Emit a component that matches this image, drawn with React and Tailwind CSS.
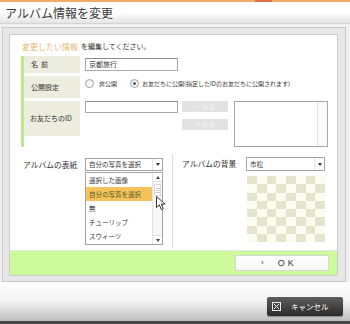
export default function App() {
  const cells = Array.from({ length: 64 }, (_, i) => (Math.floor(i / 8) + i) % 2 === 0);
  return (
    <div className="w-[350px] h-[324px] overflow-hidden bg-white flex flex-col font-['Noto_Sans_CJK_JP',sans-serif] text-[#333]">
      <div className="h-[2px] flex shrink-0">
        <div className="w-[255px] bg-[#f3ab6c]" />
        <div className="w-[17px] bg-[#e0714f]" />
        <div className="flex-1 bg-[#f3ab6c]" />
      </div>
      <div className="h-[22px] shrink-0 bg-linear-to-b from-white via-white to-[#e4e4e4] border-b border-[#d4d4d4] flex items-center pl-[5px]">
        <span className="text-[12px] leading-none text-[#3a3a3a]">アルバム情報を変更</span>
      </div>
      <div className="shrink-0 pt-[3px] pl-[2px] pr-[4px] bg-[#f0f0f0]">
        <div className="h-[255px] border border-[#c9c9c9] bg-[#e7e7e7] pl-[6px] pt-[6px] pr-[7px] pb-[5px] flex">
          <div className="flex-1 flex flex-col bg-white border border-[#cbcbcb]">
            {/* instruction */}
            <div className="pt-[7px] pl-[12px] leading-[9px] flex items-end">
              <span className="text-[8px] text-[#ebb570]">変更したい情報</span>
              <span className="text-[7px] ml-[3px] text-[#333]">を編集してください。</span>
            </div>
            {/* form */}
            <div className="mt-[5px] ml-[11px] flex">
              <div className="w-[59px] border-l-[3px] border-[#b9ea8e] flex flex-col gap-[3px] text-[7px] text-[#333]">
                <div className="h-[17px] bg-[#ececdf] pl-[7px] flex items-center">
                  <span>名</span>
                  <span className="ml-[3px]">前</span>
                </div>
                <div className="h-[22px] bg-[#ececdf] pl-[7px] flex items-center">公開設定</div>
                <div className="h-[35px] bg-[#ececdf] pl-[6px] flex items-center">お友だちのID</div>
              </div>
              <div className="ml-[5px] flex flex-col gap-[3px]">
                <div className="h-[17px] pt-[2px]">
                  <div className="w-[93px] h-[13px] border border-[#a9a9a9] border-t-[#8d8d8d] bg-white pl-[3px] text-[7px] leading-[11px]">京都旅行</div>
                </div>
                <div className="h-[22px] pt-[3px] flex items-start text-[6px] leading-[9px] text-[#333]">
                  <div className="flex items-center">
                    <div className="w-[9px] h-[9px] rounded-full border border-[#9d9d9d] bg-linear-to-b from-[#f0f0f0] to-white" />
                    <span className="ml-[5px]">非公開</span>
                  </div>
                  <div className="flex items-center ml-[13px]">
                    <div className="w-[9px] h-[9px] rounded-full border border-[#9d9d9d] bg-linear-to-b from-[#f0f0f0] to-white flex items-center justify-center">
                      <div className="w-[3px] h-[3px] rounded-full bg-[#555]" />
                    </div>
                    <span className="ml-[3px] whitespace-nowrap">お友だちに公開(指定したIDのお友だちに公開されます)</span>
                  </div>
                </div>
                <div className="h-[46px] flex items-start">
                  <div className="w-[93px] h-[12px] border border-[#a9a9a9] border-t-[#8d8d8d] bg-white" />
                  <div className="ml-[4px] w-[46px] flex flex-col gap-[7px]">
                    <div className="h-[11px] bg-[#e2e2e2] text-[6px] leading-[11px] text-[#f4f4f4] text-center">← 追 加</div>
                    <div className="h-[11px] bg-[#e2e2e2] text-[6px] leading-[11px] text-[#f4f4f4] text-center">→ 削 除</div>
                  </div>
                  <div className="ml-[6px] w-[94px] h-[46px] border border-[#a6a6a6] bg-white flex justify-end">
                    <div className="w-[10px] border-l border-[#e0e0e0] bg-[#fafafa]" />
                  </div>
                </div>
              </div>
            </div>
            {/* lower section */}
            <div className="mt-[7px] h-[94px] flex">
              <div className="w-[163px] border-r border-[#dddddd] pt-[4px] pl-[13px] flex items-start">
                <div className="w-[62px] h-[13px] text-[7.75px] leading-[13px] text-[#333] whitespace-nowrap">アルバムの表紙</div>
                <div className="flex flex-col">
                  <div className="w-[78px] h-[13px] border border-[#a3a3a3] bg-white flex">
                    <div className="flex-1 pl-[3px] text-[6.5px] leading-[11px]">自分の写真を選択</div>
                    <div className="w-[10px] border-l border-[#e2e2e2] flex items-center justify-center">
                      <div className="w-0 h-0 border-l-[2px] border-r-[2px] border-t-[3px] border-l-transparent border-r-transparent border-t-[#333]" />
                    </div>
                  </div>
                  <div className="relative mt-[1px] w-[78px] h-[73px] border border-[#a3a3a3] bg-white flex">
                    <div className="flex-1 flex flex-col text-[6.5px] leading-[14px]">
                      <div className="h-[14px] pl-[3px]">選択した画像</div>
                      <div className="h-[14px] pl-[3px] bg-[#f5c25c] text-[#4f5f23]">自分の写真を選択</div>
                      <div className="h-[14px] pl-[3px]">無</div>
                      <div className="h-[14px] pl-[3px]">チューリップ</div>
                      <div className="h-[14px] pl-[3px]">スウィーツ</div>
                    </div>
                    <div className="w-[10px] border-l border-[#e4e4e4] bg-[#f7f7f7] flex flex-col">
                      <div className="h-[9px] border-b border-[#e0e0e0] bg-white flex items-center justify-center">
                        <div className="w-0 h-0 border-l-[2px] border-r-[2px] border-b-[3px] border-l-transparent border-r-transparent border-b-[#444]" />
                      </div>
                      <div className="mt-[2px] mx-[1px] h-[12px] border border-[#d8d8d8] bg-white flex flex-col items-center justify-center gap-[1px]">
                        <div className="w-[4px] h-px bg-[#c8c8c8]" />
                        <div className="w-[4px] h-px bg-[#c8c8c8]" />
                        <div className="w-[4px] h-px bg-[#c8c8c8]" />
                      </div>
                      <div className="mt-auto h-[9px] border-t border-[#e0e0e0] bg-white flex items-center justify-center">
                        <div className="w-0 h-0 border-l-[2px] border-r-[2px] border-t-[3px] border-l-transparent border-r-transparent border-t-[#444]" />
                      </div>
                    </div>
                    <svg className="absolute left-[70px] top-[23px]" width="11" height="15" viewBox="0 0 11 15">
                      <path d="M0.5 0.5 L0.5 11.5 L3.3 8.8 L5.4 13.6 L7.3 12.8 L5.3 8.1 L9.2 8.1 Z" fill="white" stroke="#222" strokeWidth="0.9" strokeLinejoin="round" />
                    </svg>
                  </div>
                </div>
              </div>
              <div className="flex-1 pt-[3px] pl-[9px] flex items-start">
                <div className="w-[64px] h-[14px] text-[7.75px] leading-[14px] text-[#333] whitespace-nowrap">アルバムの背景</div>
                <div className="flex flex-col">
                  <div className="w-[79px] h-[14px] border border-[#a3a3a3] bg-white flex">
                    <div className="flex-1 pl-[3px] text-[6.5px] leading-[12px]">市松</div>
                    <div className="w-[10px] border-l border-[#e2e2e2] flex items-center justify-center">
                      <div className="w-0 h-0 border-l-[2px] border-r-[2px] border-t-[3px] border-l-transparent border-r-transparent border-t-[#333]" />
                    </div>
                  </div>
                  <div className="mt-[5px] ml-[1px] w-[78px] h-[66px] grid grid-cols-8 grid-rows-8">
                    {cells.map((b, i) => (
                      <div key={i} className={b ? "bg-[#e5e5cd]" : "bg-[#fcfcf1]"} />
                    ))}
                  </div>
                </div>
              </div>
            </div>
            {/* green bar */}
            <div className="mt-auto h-[25px] border-t border-[#e6e6e6] bg-[#cdfb9c] flex justify-end items-start pt-[4px] pr-[8px]">
              <div className="w-[94px] h-[16px] border border-[#d6d6d6] bg-linear-to-b from-white to-[#f6f6f6] flex items-center font-['Liberation_Sans',sans-serif] text-[#333]">
                <span className="ml-[25px] text-[8px] leading-none">›</span>
                <span className="ml-[14px] text-[9px] leading-none tracking-[3px]">OK</span>
              </div>
            </div>
          </div>
        </div>
      </div>
      {/* bottom */}
      <div className="flex-1 bg-linear-to-b from-white via-[#f3f3f3] to-[#bdbdbd] border-b-[3px] border-[#474747] flex justify-end items-start pt-[15px] pr-[7px]">
        <div className="w-[76px] h-[19px] rounded-[2px] bg-linear-to-b from-[#5e5e5e] to-[#2c2c2c] shadow-[0_1px_1px_rgba(0,0,0,0.3)] flex items-center">
          <svg className="ml-[5px]" width="9" height="9" viewBox="0 0 9 9">
            <rect x="0.5" y="0.5" width="8" height="8" fill="none" stroke="#e8e8e8" strokeWidth="1" />
            <path d="M2 2 L7 7 M7 2 L2 7" stroke="#e8e8e8" strokeWidth="1" />
          </svg>
          <span className="ml-[10px] text-[7.5px] leading-none text-white">キャンセル</span>
        </div>
      </div>
    </div>
  );
}
